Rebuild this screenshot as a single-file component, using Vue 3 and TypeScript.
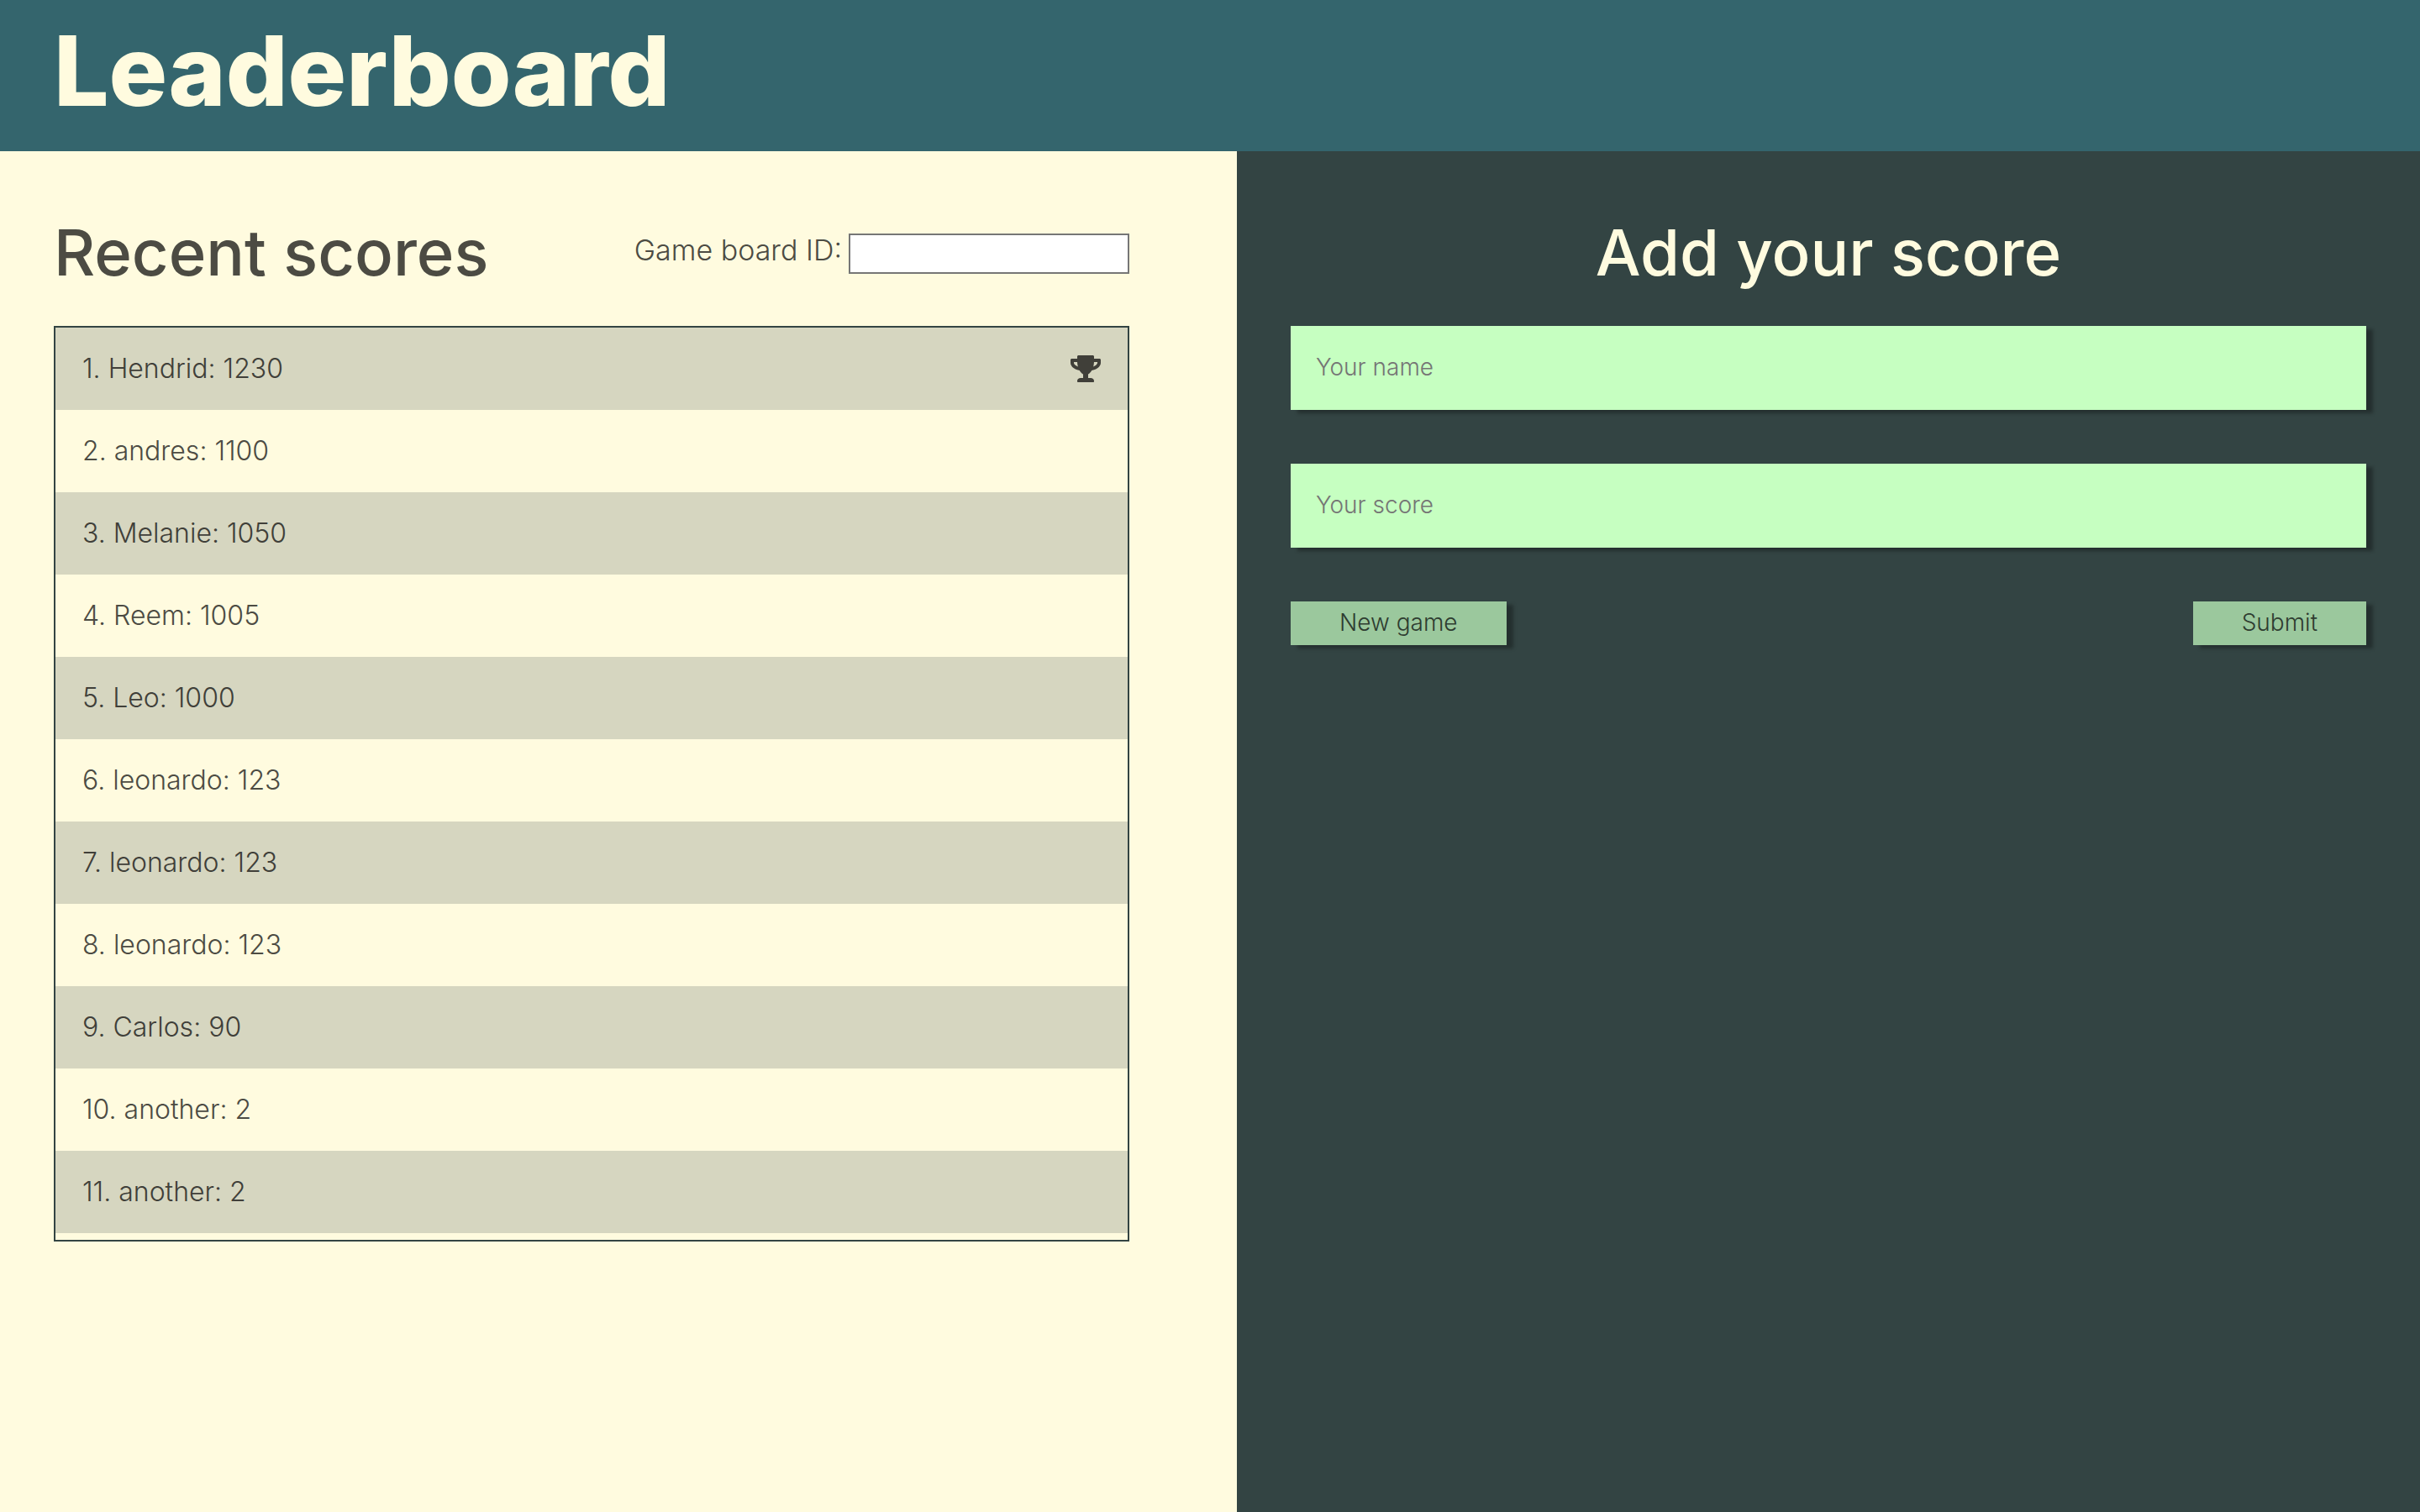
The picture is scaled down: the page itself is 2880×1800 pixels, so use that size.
<script setup lang="ts">
import { ref } from 'vue'

interface Score {
  user: string
  score: number
}

const scores = ref<Score[]>([
  { user: 'Hendrid', score: 1230 },
  { user: 'andres', score: 1100 },
  { user: 'Melanie', score: 1050 },
  { user: 'Reem', score: 1005 },
  { user: 'Leo', score: 1000 },
  { user: 'leonardo', score: 123 },
  { user: 'leonardo', score: 123 },
  { user: 'leonardo', score: 123 },
  { user: 'Carlos', score: 90 },
  { user: 'another', score: 2 },
  { user: 'another', score: 2 },
])

const boardId = ref('')
const name = ref('')
const points = ref('')

function submitScore(): void {
  if (!name.value || !points.value) return
  scores.value.push({ user: name.value, score: Number(points.value) })
  scores.value.sort((a, b) => b.score - a.score)
  name.value = ''
  points.value = ''
}

function newGame(): void {
  scores.value = []
}
</script>

<template>
  <div class="page">
    <header class="header">
      <h1 class="title">Leaderboard</h1>
    </header>
    <main class="main">
      <section class="panel recent">
        <div class="heading-row">
          <h2 class="heading">Recent scores</h2>
          <div class="board">
            <label class="board-label" for="board-id">Game board ID:</label>
            <input id="board-id" v-model="boardId" class="board-input" type="text" />
          </div>
        </div>
        <ol class="list">
          <li v-for="(entry, i) in scores" :key="i" class="row">
            <span class="entry">{{ i + 1 }}. {{ entry.user }}: {{ entry.score }}</span>
            <svg v-if="i === 0" class="trophy" viewBox="0 0 576 512" aria-hidden="true">
              <path
                d="M552 64H448V24c0-13.3-10.7-24-24-24H152c-13.3 0-24 10.7-24 24v40H24C10.7 64 0 74.7 0 88v56c0 35.7 22.5 72.4 61.9 100.7 31.5 22.7 69.8 37.1 110 41.7C203.3 338.5 240 360 240 360v72h-48c-35.3 0-64 20.7-64 56v12c0 6.6 5.4 12 12 12h296c6.6 0 12-5.4 12-12v-12c0-35.3-28.7-56-64-56h-48v-72s36.7-21.5 68.1-73.6c40.3-4.6 78.6-19 110-41.7 39.3-28.3 61.9-65 61.9-100.7V88c0-13.3-10.7-24-24-24zM99.3 192.8C74.9 175.2 64 155.6 64 144v-16h64.2c1 32.6 5.8 61.2 12.8 86.2-15.1-5.2-29.2-12.4-41.7-21.4zM512 144c0 16.1-17.7 36.1-35.3 48.8-12.5 9-26.7 16.2-41.8 21.4 7-25 11.8-53.6 12.8-86.2H512v16z"
              />
            </svg>
          </li>
        </ol>
      </section>
      <section class="panel add">
        <div class="heading-row">
          <h2 class="heading">Add your score</h2>
        </div>
        <form class="form" @submit.prevent="submitScore">
          <input v-model="name" class="field" type="text" placeholder="Your name" aria-label="Your name" />
          <input v-model="points" class="field" type="text" placeholder="Your score" aria-label="Your score" />
          <div class="actions">
            <button class="button" type="button" @click="newGame">New game</button>
            <button class="button" type="submit">Submit</button>
          </div>
        </form>
      </section>
    </main>
  </div>
</template>

<style>
body {
  margin: 0;
  background: #fffbdf;
}
</style>

<style scoped>
.page,
.page * {
  box-sizing: border-box;
}

.page {
  display: flex;
  flex-direction: column;
  min-height: 100vh;
  font-family: Inter, 'Open Sans', sans-serif;
  font-size: 32px;
  font-weight: 350;
  color: #4c4b43;
}

.header {
  padding: 0 64px 12px;
  background: #34656d;
}

.title {
  margin: 0;
  font-size: 116px;
  font-weight: 800;
  line-height: 168px;
  color: #fffbdf;
}

.main {
  display: flex;
  flex: 1;
}

.panel {
  flex: 1 1 0;
  padding: 64px;
}

.recent {
  padding-right: 128px;
  background: #fffbdf;
}

.add {
  background: #334443;
}

.heading-row {
  display: flex;
  align-items: center;
  justify-content: space-between;
  height: 112px;
  margin-bottom: 32px;
}

.heading {
  margin: 0;
  font-size: 76px;
  font-weight: 500;
  line-height: 112px;
}

.add .heading {
  flex: 1;
  text-align: center;
  color: #fffbdf;
}

.board {
  display: flex;
  align-items: flex-start;
  gap: 8px;
  height: 52px;
}

.board-label {
  font-size: 34px;
  line-height: 48px;
}

.board-input {
  align-self: flex-end;
  width: 334px;
  height: 48px;
  padding: 2px 4px;
  border: 2px solid #767676;
  background: #ffffff;
  font: inherit;
}

.list {
  margin: 0;
  padding: 0 0 8px;
  border: 2px solid #334443;
  list-style: none;
}

.row {
  display: flex;
  align-items: center;
  justify-content: space-between;
  height: 98px;
  padding: 0 32px;
}

.entry {
  padding-bottom: 2px;
}

.row:nth-child(odd) {
  background: #d6d6c0;
  color: #403f39;
}

.trophy {
  width: 36px;
  height: 32px;
  fill: currentColor;
}

.form {
  display: flex;
  flex-direction: column;
  gap: 64px;
}

.field {
  width: 100%;
  height: 100px;
  padding: 0 30px 2px;
  border: 0;
  border-radius: 0;
  background: #c6ffc1;
  box-shadow: 8px 4px 4px rgba(0, 0, 0, 0.3);
  font: inherit;
  font-size: 28px;
  color: #334443;
}

.field::placeholder {
  color: #757575;
}

.actions {
  display: flex;
  justify-content: space-between;
}

.button {
  height: 52px;
  padding: 0 58px 2px;
  border: 0;
  background: #9bc89d;
  box-shadow: 8px 4px 4px rgba(0, 0, 0, 0.3);
  font: inherit;
  font-size: 28px;
  color: #2e3c30;
  cursor: pointer;
}
</style>
